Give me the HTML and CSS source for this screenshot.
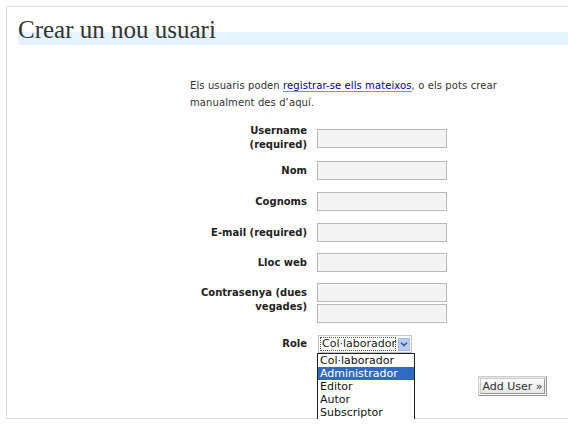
FILE: index.html
```html
<!DOCTYPE html>
<html lang="ca">
<head>
<meta charset="utf-8">
<title>Crear un nou usuari</title>
<link rel="stylesheet" href="styles.css">
</head>
<body>
<div class="wrap">
  <h2 class="title">Crear un nou usuari</h2>
  <div class="form">
    <p class="intro">Els usuaris poden <a href="#">registrar-se ells mateixos</a>, o els pots crear manualment des d’aquí.</p>
    <div class="rows">
      <div class="row row-user">
        <label class="lbl">Username (required)</label>
        <input class="txt" type="text">
      </div>
      <div class="row row-nom">
        <label class="lbl">Nom</label>
        <input class="txt" type="text">
      </div>
      <div class="row">
        <label class="lbl">Cognoms</label>
        <input class="txt" type="text">
      </div>
      <div class="row">
        <label class="lbl">E-mail (required)</label>
        <input class="txt" type="text">
      </div>
      <div class="row row-tight">
        <label class="lbl">Lloc web</label>
        <input class="txt" type="text">
      </div>
      <div class="row row-pass row-tight">
        <label class="lbl">Contrasenya (dues vegades)</label>
        <div class="pair">
          <input class="txt" type="password">
          <input class="txt" type="password">
        </div>
      </div>
      <div class="row">
        <label class="lbl">Role</label>
        <div class="select">
          <span class="sel-value">Col·laborador</span>
          <span class="sel-arrow">
            <svg width="10" height="10" viewBox="0 0 10 10"><path d="M2 3.5 L5 6.5 L8 3.5" fill="none" stroke="#3d5a9a" stroke-width="1.6"/></svg>
          </span>
          <ul class="listbox">
            <li>Col·laborador</li>
            <li class="on">Administrador</li>
            <li>Editor</li>
            <li>Autor</li>
            <li>Subscriptor</li>
          </ul>
        </div>
      </div>
    </div>
  </div>
  <div class="submit">
    <button class="btn" type="button">Add User »</button>
  </div>
</div>
</body>
</html>
```

FILE: styles.css
```css
html, body {
  margin: 0;
  padding: 0;
  background: #fff;
}

body {
  font-family: "DejaVu Sans", Verdana, sans-serif;
  font-size: 10px;
  color: #333;
}

.wrap {
  margin: 6px 0 0 6px;
  border-top: 1px solid #dcdcdc;
  border-left: 1px solid #dcdcdc;
  border-bottom: 1px solid #dcdcdc;
  padding: 0 0 22px 0;
}

.title {
  margin: 8px 0 0 11px;
  height: 30px;
  line-height: 30px;
  font-family: "Liberation Serif", "Times New Roman", serif;
  font-weight: normal;
  font-size: 25px;
  color: #333;
  background: linear-gradient(#e5f3ff, #e5f3ff) no-repeat left bottom / 100% 13px;
}

.form {
  margin-left: 183px;
}

.intro {
  margin: 32px 0 0 0;
  width: 330px;
  line-height: 17px;
  letter-spacing: 0.1px;
}

.intro a {
  color: #00019b;
  text-decoration: none;
  border-bottom: 1px solid #69c;
}

.rows {
  display: flex;
  flex-direction: column;
  margin-top: 13px;
}

.row {
  display: flex;
  align-items: center;
  margin-top: 12px;
}

.row-user {
  margin-top: 0;
}

.row-nom {
  margin-top: 9px;
}

.row-tight {
  margin-top: 11px;
}

.lbl {
  width: 112px;
  margin-left: 5px;
  margin-right: 10px;
  text-align: right;
  font-weight: bold;
  color: #222;
  line-height: 14px;
}

.row-pass {
  align-items: flex-start;
}

.row-pass .lbl {
  padding-top: 3px;
}

.txt {
  box-sizing: border-box;
  width: 130px;
  height: 19px;
  margin: 0;
  padding: 1px 2px;
  background: #f4f4f4;
  border: 1px solid #b8b8b8;
  font: inherit;
}

.pair {
  display: flex;
  flex-direction: column;
  gap: 2px;
}

.select {
  position: relative;
  box-sizing: border-box;
  width: 94px;
  height: 18px;
  margin-left: 1px;
  border: 1px solid #c4c4c4;
  background: #fff;
  display: flex;
  align-items: center;
  padding: 1px;
  font-size: 11px;
}

.sel-value {
  flex: 1;
  height: 14px;
  line-height: 14px;
  padding-left: 2px;
  outline: 1px dotted #555;
  outline-offset: -1px;
  color: #222;
  margin-right: 2px;
}

.sel-arrow {
  width: 12px;
  height: 13px;
  background: #b9cdf3;
  border: 1px solid #a2b8e6;
  box-sizing: border-box;
  display: flex;
  align-items: center;
  justify-content: center;
}

.sel-arrow svg {
  display: block;
}

.listbox {
  position: absolute;
  top: 17px;
  left: -2px;
  width: 98px;
  box-sizing: border-box;
  margin: 0;
  padding: 0;
  list-style: none;
  background: #fff;
  border: 1px solid #222;
  z-index: 5;
}

.listbox li {
  height: 13px;
  line-height: 13px;
  padding-left: 2px;
  color: #111;
}

.listbox li.on {
  background: #316ac5;
  color: #fff;
}

.submit {
  display: flex;
  justify-content: flex-end;
  margin-top: 23px;
  padding-right: 21px;
}

.btn {
  box-sizing: border-box;
  width: 69px;
  height: 20px;
  padding: 0;
  font: inherit;
  font-size: 11px;
  color: #333;
  background: linear-gradient(#fafafa, #e6e6e6);
  border: 3px double #999;
  border-left-color: #ccc;
  border-top-color: #ccc;
}
```
